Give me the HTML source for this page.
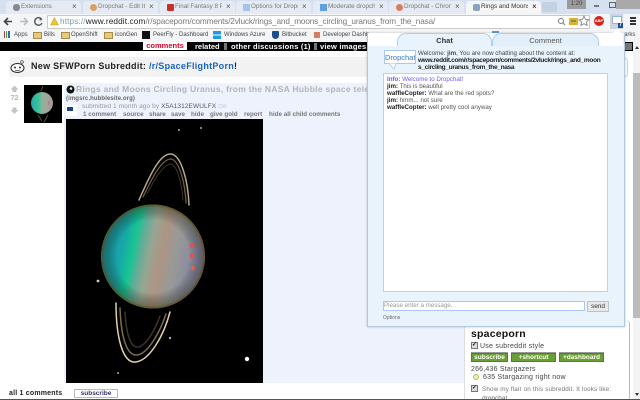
<!DOCTYPE html>
<html>
<head>
<meta charset="utf-8">
<style>
html,body{margin:0;padding:0;}
body{width:640px;height:400px;overflow:hidden;position:relative;background:#fff;font-family:"Liberation Sans",sans-serif;}
#w{position:absolute;left:0;top:0;width:640px;height:400px;overflow:hidden;filter:blur(.3px);background:#fff;}
.a{position:absolute;white-space:nowrap;}
.tab{position:absolute;top:1px;height:13px;width:75px;background:#e6ebf3;border-radius:4px 4px 0 0;font-size:6.300px;line-height:12px;color:#777;overflow:hidden;white-space:nowrap;}
.tab span{position:absolute;left:15px;top:0;width:47px;overflow:hidden;}
.tab b{position:absolute;left:66px;top:0;font-weight:normal;color:#555;font-size:8px;}
.tab i{position:absolute;left:7px;top:3px;width:7px;height:7px;display:block;}
.bm{position:absolute;top:30px;font-size:6px;line-height:10px;color:#444;white-space:nowrap;}
.bi{position:absolute;}
.act{font-size:6.300px;font-weight:bold;color:#777;top:110px;line-height:9px;}
.g{position:absolute;top:353px;height:7px;background:#6a9f33;border:1px solid #4f8022;box-shadow:0 -1px 0 #999;color:#fff;font-size:6.500px;font-weight:bold;line-height:7px;text-align:center;}
</style>
</head>
<body>
<div id="w">
<!-- tab strip -->
<div class="a" style="left:0;top:0;width:640px;height:14px;background:#d5e1f1;"></div>
<div class="tab" style="left:6px;"><i style="background:#889;border-radius:3px;"></i><span>Extensions</span><b>×</b></div>
<div class="tab" style="left:83px;"><i style="background:#d9a066;border-radius:4px;"></i><span>Dropchat - Edit Ite</span><b>×</b></div>
<div class="tab" style="left:160px;"><i style="background:#c4302b;border-radius:1px;"></i><span>Final Fantasy 8 Pia</span><b>×</b></div>
<div class="tab" style="left:236px;"><i style="background:#a5c3ea;"></i><span>Options for Dropc</span><b>×</b></div>
<div class="tab" style="left:313px;"><i style="background:#5da1e0;"></i><span>Moderate dropcha</span><b>×</b></div>
<div class="tab" style="left:389px;"><i style="background:#d97d5e;border-radius:4px;"></i><span>Dropchat - Chrom</span><b>×</b></div>
<div class="tab" style="left:466px;background:#f6f6f7;color:#333;height:14px;"><i style="background:#8aa4bf;border-radius:2px;"></i><span>Rings and Moons</span><b style="color:#000;">×</b></div>
<div class="a" style="left:542px;top:2px;width:15px;height:10px;background:#c4d1e2;border-radius:2px;"></div>
<div class="a" style="left:567px;top:0;width:19px;height:9px;background:#9b9b9b;color:#444;font-size:6px;line-height:9px;text-align:center;">1:20</div>
<div class="a" style="left:594px;top:5px;width:5px;height:2px;background:#777;"></div>
<div class="a" style="left:609px;top:2px;width:5px;height:4px;border:1px solid #666;"></div>
<div class="a" style="left:616px;top:0;width:24px;height:9px;background:#a9a9a9;"></div>

<!-- toolbar -->
<div class="a" style="left:0;top:14px;width:640px;height:15px;background:#f4f5f7;"></div>
<svg class="a" style="left:0;top:14px;" width="50" height="15">
<path d="M12 7.500H5M8 4L4.500 7.500L8 11" stroke="#444" stroke-width="1.600" fill="none"/>
<path d="M20 7.500H27M24 4L27.500 7.500L24 11" stroke="#bbb" stroke-width="1.600" fill="none"/>
<path d="M41.500 5A3.800 3.800 0 1 0 42 9" stroke="#555" stroke-width="1.400" fill="none"/><path d="M40 3.500L42.500 6L39.500 6.500Z" fill="#555"/>
</svg>
<div class="a" style="left:47px;top:15px;width:541px;height:12px;background:#fff;border:1px solid #c9c9c9;border-radius:1px;"></div>
<svg class="a" style="left:50px;top:17px;" width="9" height="9"><path d="M4.500 0.500L8.500 8H0.500Z" fill="#f2c230" stroke="#a98a20" stroke-width="0.400"/></svg>
<div class="a" style="left:60px;top:15px;font-size:8.200px;line-height:13px;color:#777;letter-spacing:.14px;"><span style="color:#79a;">https://</span><span style="color:#222;">www.reddit.com</span><span style="letter-spacing:-.13px;">/r/spaceporn/comments/2vluck/rings_and_moons_circling_uranus_from_the_nasa/</span></div>
<svg class="a" style="left:556px;top:17px;" width="24" height="10"><circle cx="5" cy="4" r="2.500" stroke="#777" fill="none"/><path d="M7 6L9 8" stroke="#777"/><rect x="13" y="1" width="9" height="7" fill="#e0b030"/><rect x="15" y="3" width="5" height="2" fill="#7a9a3a"/></svg>
<svg class="a" style="left:578px;top:15px;" width="12" height="12"><path d="M6 1L7.500 4.500L11 4.800L8.400 7L9.200 10.500L6 8.700L2.800 10.500L3.600 7L1 4.800L4.500 4.500Z" fill="#fff" stroke="#777" stroke-width=".8"/></svg>
<div class="a" style="left:594px;top:16px;width:10px;height:10px;border-radius:5px;background:#d8231c;color:#fff;font-size:4px;font-weight:bold;line-height:10px;text-align:center;">ABP</div>
<div class="a" style="left:610px;top:14px;width:13px;height:15px;background:#cfd4dc;"></div>
<div class="a" style="left:612px;top:16px;width:8px;height:6px;background:#fff;border:1px solid #8fb6e8;border-radius:1px;"></div>
<div class="a" style="left:618px;top:23px;width:5px;height:5px;background:#1d4fa5;color:#fff;font-size:5px;line-height:5px;font-weight:bold;text-align:center;">7</div>
<div class="a" style="left:630px;top:17px;width:6px;height:1.500px;background:#333;box-shadow:0 3px 0 #333,0 6px 0 #333;"></div>

<!-- bookmarks -->
<div class="a" style="left:0;top:29px;width:640px;height:13px;background:#f4f5f7;"></div>
<div class="a" style="left:4px;top:31px;width:7px;height:7px;background:repeating-linear-gradient(90deg,#c33 0 1px,#fff 1px 2px,#3a3 2px 3px,#fff 3px 4px,#36c 4px 5px);"></div>
<div class="bm" style="left:14px;">Apps</div>
<div class="bi" style="left:33px;top:32px;width:7px;height:5px;background:#e8c97a;border:1px solid #a98d45;"></div><div class="bm" style="left:44px;">Bills</div>
<div class="bi" style="left:61px;top:32px;width:7px;height:5px;background:#e8c97a;border:1px solid #a98d45;"></div><div class="bm" style="left:71px;">OpenShift</div>
<div class="bi" style="left:104px;top:32px;width:7px;height:5px;background:#e8c97a;border:1px solid #a98d45;"></div><div class="bm" style="left:115px;">iconGen</div>
<div class="bi" style="left:142px;top:31px;width:8px;height:8px;background:#111;"></div><div class="bm" style="left:153px;">PeerFly - Dashboard</div>
<div class="bi" style="left:213px;top:31px;width:8px;height:8px;background:repeating-linear-gradient(0deg,#1e9be0 0 3.500px,#fff 3.500px 4.500px);"></div><div class="bm" style="left:224px;">Windows Azure</div>
<div class="bi" style="left:272px;top:31px;width:7px;height:8px;background:#1f4e8c;border-radius:1px 1px 4px 4px;"></div><div class="bm" style="left:282px;">Bitbucket</div>
<div class="bi" style="left:314px;top:32px;width:6px;height:6px;background:#d97d5e;"></div><div class="bm" style="left:323px;">Developer Dashb</div>
<div class="bi" style="left:492px;top:31px;width:7px;height:2px;background:#5b9be0;"></div>
<div class="bm" style="left:624px;">arks</div>

<!-- reddit header -->
<div class="a" style="left:0;top:42px;width:640px;height:9px;background:#000;"></div>
<div class="a" style="left:143px;top:42px;width:44px;height:8px;background:#fff;color:#e0002a;font-size:7.500px;font-weight:bold;line-height:8px;text-align:center;">comments</div>
<div class="a" style="left:195px;top:42px;color:#fff;font-size:7.500px;font-weight:bold;line-height:9px;">related</div>
<div class="a" style="left:224px;top:43px;width:3px;height:7px;background:#777;"></div>
<div class="a" style="left:231px;top:42px;color:#fff;font-size:7.500px;font-weight:bold;line-height:9px;letter-spacing:.2px;">other discussions (1)</div>
<div class="a" style="left:314px;top:43px;width:3px;height:7px;background:#777;"></div>
<div class="a" style="left:320px;top:42px;color:#fff;font-size:7.500px;font-weight:bold;line-height:9px;letter-spacing:.2px;">view images</div>
<div class="a" style="left:623px;top:43px;width:9px;height:7px;background:#777;"></div>

<!-- announcement -->
<div class="a" style="left:9px;top:57px;width:360px;height:20px;background:#f2f2f2;border-radius:3px;"></div>
<svg class="a" style="left:9px;top:59px;" width="17" height="15"><ellipse cx="8.500" cy="9" rx="6.500" ry="4.500" fill="#fff" stroke="#222"/><circle cx="6" cy="8.500" r="1" fill="#333"/><circle cx="11" cy="8.500" r="1" fill="#333"/><path d="M6 11Q8.500 12.500 11 11" stroke="#333" fill="none" stroke-width=".7"/><circle cx="13" cy="3" r="1.300" fill="#fff" stroke="#333" stroke-width=".7"/></svg>
<div class="a" style="left:31px;top:61px;font-size:9px;font-weight:bold;line-height:11px;color:#222;letter-spacing:.28px;">New SFWPorn Subreddit: <span style="color:#1a62c0;">/r/SpaceFlightPorn</span>!</div>

<!-- post -->
<div class="a" style="left:64px;top:83px;width:400px;height:300px;background:#eef2fc;"></div>
<svg class="a" style="left:9px;top:85px;" width="11" height="30"><path d="M5.500 0.500L9.500 4.500H7.500V7H3.500V4.500H1.500Z" fill="#c5c5c5"/><path d="M5.500 29L9.500 25H7.500V22.500H3.500V25H1.500Z" fill="#c5c5c5"/></svg>
<div class="a" style="left:9px;top:94px;width:11px;text-align:center;font-size:7px;line-height:9px;color:#b5b5b5;font-weight:bold;">72</div>

<!-- thumb -->
<svg class="a" style="left:24px;top:85px;" width="38" height="38"><defs><linearGradient id="t" x1="0" x2="1"><stop offset="0" stop-color="#2aa8a8"/><stop offset=".35" stop-color="#36c79a"/><stop offset=".5" stop-color="#93b09a"/><stop offset="1" stop-color="#a89a9a"/></linearGradient></defs><rect width="38" height="38" fill="#000"/><circle cx="18" cy="18" r="11" fill="url(#t)"/><path d="M25 16v4" stroke="#d05a9a"/><path d="M14 30L18 36M24 30L20 37M17 6L19 1" stroke="#5a5040"/></svg>

<svg class="a" style="left:66px;top:85px;" width="9" height="9"><circle cx="4.500" cy="4.500" r="4" fill="#111"/><circle cx="5" cy="3.500" r="1.300" fill="#fff"/></svg>
<div class="a" style="left:76px;top:84px;font-size:8.500px;font-weight:bold;line-height:11px;color:#b4b4b4;letter-spacing:.27px;width:292px;overflow:hidden;">Rings and Moons Circling Uranus, from the NASA Hubble space telescope</div>
<div class="a" style="left:66px;top:95px;font-size:6px;font-weight:bold;line-height:9px;color:#666;letter-spacing:.1px;">(imgsrc.hubblesite.org)</div>
<div class="a" style="left:66px;top:105px;width:11px;height:11px;background:#fff;"></div>
<div class="a" style="left:67px;top:107px;width:6px;height:4px;background:#1f3f80;"></div>
<div class="a" style="left:82px;top:102px;font-size:6.500px;line-height:9px;color:#999;letter-spacing:.1px;">submitted 1 month ago by <span style="color:#557;">X5A1312EWULFX</span> <span style="color:#bcd;font-size:5px;">CW</span></div>
<div class="a act" style="left:83px;">1 comment</div>
<div class="a act" style="left:123px;">source</div>
<div class="a act" style="left:149px;">share</div>
<div class="a act" style="left:171px;">save</div>
<div class="a act" style="left:191px;">hide</div>
<div class="a act" style="left:210px;">give gold</div>
<div class="a act" style="left:244px;">report</div>
<div class="a act" style="left:269px;">hide all child comments</div>

<!-- main image -->
<svg class="a" style="left:66px;top:119px;" width="197" height="264" viewBox="66 119 197 264">
<defs>
<linearGradient id="p" x1="0" x2="1" y1=".4" y2=".6">
<stop offset="0" stop-color="#1898a8"/><stop offset=".2" stop-color="#18a6a8"/><stop offset=".3" stop-color="#14c692"/><stop offset=".37" stop-color="#5cae98"/><stop offset=".46" stop-color="#95a692"/><stop offset=".57" stop-color="#ae9484"/><stop offset=".7" stop-color="#989a96"/><stop offset=".85" stop-color="#8a8ca0"/><stop offset="1" stop-color="#8880a8"/>
</linearGradient>
<radialGradient id="sh" cx=".5" cy=".5" r=".5"><stop offset=".7" stop-color="#000" stop-opacity="0"/><stop offset=".95" stop-color="#2a2a10" stop-opacity=".4"/><stop offset="1" stop-color="#6a5414" stop-opacity=".95"/></radialGradient>
</defs>
<rect x="66" y="119" width="197" height="264" fill="#000"/>
<g fill="none" stroke-linecap="round">
<path d="M139 200C150 175 160 153 171 154C181 155 188 180 189 205" stroke="#b8a888" stroke-width="1.500"/>
<path d="M143 197C153 176 162 159 171 159C179 160 185 182 186 203" stroke="#6a5e4a" stroke-width="1.300"/>
<path d="M147 194C155 178 164 164 171 164C177 165 182 184 183 200" stroke="#3e3628" stroke-width="1"/>
<path d="M116 303C116 335 122 364 136 362C150 360 164 335 170 312" stroke="#e0d0ac" stroke-width="1.500"/>
<path d="M120 308C121 335 126 356 137 355C148 354 160 332 166 314" stroke="#7a6e56" stroke-width="1.500"/>
<path d="M125 312C126 332 130 348 138 347C146 346 155 330 160 316" stroke="#3c3428" stroke-width="1.500"/>
</g>
<circle cx="153" cy="256.500" r="52" fill="url(#p)"/>
<circle cx="153" cy="256.500" r="52" fill="url(#sh)"/>
<ellipse cx="192" cy="246" rx="2.500" ry="2" fill="#f04a50"/>
<ellipse cx="192" cy="256" rx="2" ry="2.500" fill="#f04a48"/>
<ellipse cx="193" cy="268" rx="1.800" ry="2.300" fill="#e8603c"/>
<g fill="#b8a898"><circle cx="179" cy="130" r="1"/><circle cx="201" cy="128" r="1"/><circle cx="98" cy="281" r="1.400" fill="#d8c8b0"/><circle cx="170" cy="338" r="1.200"/><circle cx="118" cy="373" r="1"/></g>
<circle cx="247" cy="359" r="2.200" fill="#fff"/>
</svg>

<!-- sidebar -->
<div class="a" style="left:464px;top:320px;width:164px;height:80px;background:#fff;border-left:1px solid #ddd;border-right:1px solid #bbb;border-radius:0 4px 0 0;"></div>
<div class="a" style="left:623px;top:58px;width:4px;height:17px;border:1px solid #ccc;border-left:none;border-radius:0 3px 3px 0;"></div>
<div class="a" style="left:471px;top:328px;font-size:10.500px;font-weight:bold;line-height:13px;color:#111;letter-spacing:.2px;">spaceporn</div>
<div class="a" style="left:471px;top:342px;width:5px;height:5px;background:#ddd;border:1px solid #777;color:#111;font-size:6px;line-height:5px;font-weight:bold;">✓</div>
<div class="a" style="left:480px;top:342px;font-size:7px;line-height:9px;color:#444;letter-spacing:.25px;">Use subreddit style</div>
<div class="g" style="left:471px;width:35px;">subscribe</div>
<div class="g" style="left:511px;width:43px;">+shortcut</div>
<div class="g" style="left:559px;width:43px;">+dashboard</div>
<div class="a" style="left:471px;top:365px;font-size:7px;line-height:9px;color:#444;letter-spacing:.2px;">266,436 Stargazers</div>
<div class="a" style="left:473px;top:374px;width:4px;height:4px;border:1.500px solid #a6c74a;border-radius:4px;background:#e4f0c4;"></div>
<div class="a" style="left:483px;top:373px;font-size:7px;line-height:9px;color:#444;letter-spacing:.22px;">635 Stargazing right now</div>
<div class="a" style="left:471px;top:385px;width:5px;height:5px;background:#ddd;border:1px solid #777;color:#111;font-size:6px;line-height:5px;font-weight:bold;">✓</div>
<div class="a" style="left:482px;top:385px;font-size:6.300px;line-height:9px;color:#777;letter-spacing:.15px;">Show my flair on this subreddit. It looks like:</div>
<div class="a" style="left:482px;top:394px;font-size:6.500px;line-height:9px;color:#666;">dropchat</div>

<!-- scrollbar -->
<div class="a" style="left:633px;top:42px;width:7px;height:358px;background:#f4f4f4;"></div>
<div class="a" style="left:633px;top:73px;width:7px;height:245px;background:#bcbcbc;"></div>
<div class="a" style="left:635px;top:46px;width:0;height:0;border-left:2px solid transparent;border-right:2px solid transparent;border-bottom:3px solid #333;"></div>
<div class="a" style="left:635px;top:393px;width:0;height:0;border-left:2px solid transparent;border-right:2px solid transparent;border-top:3px solid #333;"></div>

<!-- bottom -->
<div class="a" style="left:9px;top:389px;font-size:7px;font-weight:bold;line-height:9px;color:#222;letter-spacing:.2px;">all 1 comments</div>
<div class="a" style="left:74px;top:389px;width:42px;height:7px;border:1px solid #bbb;background:#fff;color:#336;font-size:6.500px;font-weight:bold;line-height:7px;text-align:center;">subscribe</div>
<div class="a" style="left:0;top:399px;width:640px;height:1px;background:#555;"></div>

<!-- popup -->
<div class="a" style="left:367px;top:33px;width:256px;height:293px;background:#e9f3fc;border:1px solid #b4c8dc;border-top:none;box-shadow:0 0 2px rgba(0,0,0,.25);"></div>
<div class="a" style="left:368px;top:33px;width:255px;height:13px;background:#fff;"></div>
<svg class="a" style="left:612px;top:28px;" width="10" height="6"><path d="M0 5.500L5 0.500L10 5.500Z" fill="#fff"/></svg>
<div class="a" style="left:397px;top:33px;width:95px;height:13px;background:#e9f3fc;border:1px solid #a9d0ec;border-bottom:none;border-radius:9px 9px 0 0;box-sizing:border-box;text-align:center;font-size:7.500px;font-weight:bold;line-height:13px;color:#333;">Chat</div>
<div class="a" style="left:492px;top:33px;width:107px;height:13px;background:#e2eff9;border:1px solid #a9d0ec;border-bottom:none;border-radius:9px 9px 0 0;box-sizing:border-box;text-align:center;font-size:7.500px;line-height:13px;color:#555;">Comment</div>
<div class="a" style="left:384px;top:50px;width:32px;height:14px;background:#fff;border:1px solid #a9c9ec;box-sizing:border-box;font-size:7.500px;line-height:13px;color:#3a78c8;text-align:center;overflow:hidden;">Dropchat</div>
<svg class="a" style="left:389px;top:63px;" width="10" height="7"><path d="M0 0.500L5 6L7 0.500" fill="#fff" stroke="#a9c9ec" stroke-width=".8"/></svg>
<div class="a" style="left:418px;top:50px;font-size:6.200px;line-height:7.200px;color:#444;">Welcome: <b>jim</b>, You are now chatting about the content at:</div>
<div class="a" style="left:418px;top:57px;font-size:6.500px;line-height:7.200px;color:#222;font-weight:bold;letter-spacing:-.3px;">www.reddit.com/r/spaceporn/comments/2vluck/rings_and_moon</div>
<div class="a" style="left:418px;top:64px;font-size:6.500px;line-height:7.200px;color:#222;font-weight:bold;letter-spacing:-.3px;">s_circling_uranus_from_the_nasa</div>
<div class="a" style="left:383px;top:73px;width:225px;height:219px;background:#fff;border:1px solid #b7d3f0;box-sizing:border-box;padding:2px 3px;font-size:6.200px;line-height:7px;color:#555;white-space:normal;">
<span style="color:#6a5ee8;"><b>Info:</b> Welcome to Dropchat!</span><br>
<b style="color:#222;">jim:</b> This is beautiful<br>
<b style="color:#222;">waffleCopter:</b> What are the red spots?<br>
<b style="color:#222;">jim:</b> hmm... not sure<br>
<b style="color:#222;">waffleCopter:</b> well pretty cool anyway
</div>
<div class="a" style="left:383px;top:301px;width:200px;height:8px;background:#fff;border:1px solid #a9c9f0;font-size:6.200px;line-height:8px;color:#999;">Please enter a message.</div>
<div class="a" style="left:587px;top:301px;width:20px;height:9px;background:#e8e8e8;border:1px solid #c0c0c0;border-radius:1px;font-size:6.500px;line-height:9px;color:#333;text-align:center;">send</div>
<div class="a" style="left:383px;top:314px;font-size:5px;line-height:8px;color:#667;">Options</div>
</div>
</body>
</html>
